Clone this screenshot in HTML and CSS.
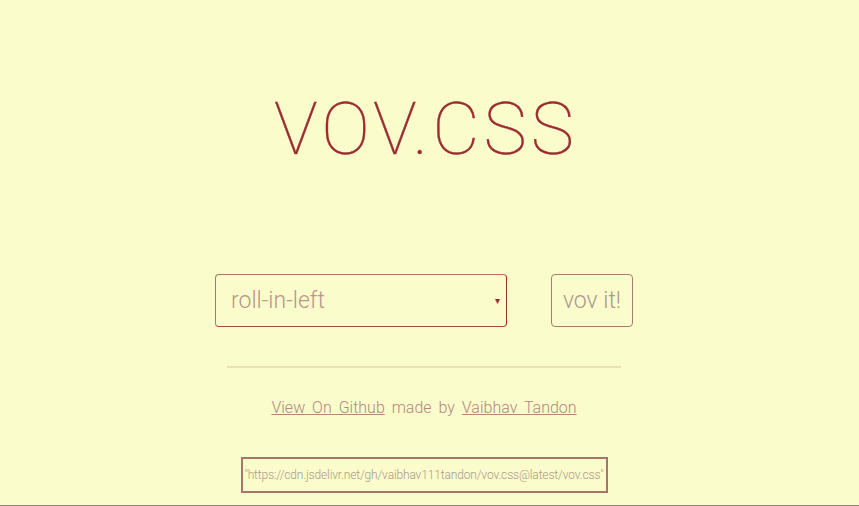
FILE: index.html
```html
<!DOCTYPE html>
<html>
<head>
<meta charset="utf-8">
<link rel="stylesheet" href="styles.css">
</head>
<body>
<div class="page">
  <h1 class="title">VOV.CSS</h1>
  <div class="controls">
    <div class="select">
      <span class="select-text">roll-in-left</span>
      <span class="caret">&#9662;</span>
    </div>
    <button class="btn">vov it!</button>
  </div>
  <hr class="rule">
  <p class="credits"><a href="#">View On Github</a> made by <a href="#">Vaibhav Tandon</a></p>
  <div class="cdn">"https://cdn.jsdelivr.net/gh/vaibhav111tandon/vov.css@latest/vov.css"</div>
</div>
</body>
</html>
```
FILE: styles.css
```css
html, body {
  margin: 0;
  padding: 0;
  background: #fafccc;
}
.page {
  height: 505px;
  border-bottom: 1px solid #8c8577;
  display: flex;
  flex-direction: column;
  align-items: center;
  padding-right: 11px;
  font-family: Roboto, "Liberation Sans", sans-serif;
  overflow: hidden;
}
.title {
  margin: 84px 0 0 0;
  font-weight: 100;
  font-size: 73px;
  line-height: 90px;
  color: #9a2b2e;
  letter-spacing: 4px;
  padding-left: 4px;
  -webkit-text-stroke: 0.4px #9a2b2e;
}
.controls {
  margin-top: 100px;
  display: flex;
  gap: 44px;
}
.select {
  width: 292px;
  height: 53px;
  box-sizing: border-box;
  border: 1px solid #ad7472;
  border-right-color: #9a2b2e;
  border-bottom-color: #a0484a;
  border-radius: 4px;
  display: flex;
  align-items: center;
  justify-content: space-between;
  padding: 0 6px 0 15px;
}
.select-text {
  font-size: 23px;
  font-weight: 300;
  color: #b9958a;
}
.caret {
  font-size: 10px;
  color: #9a2b2e;
}
.btn {
  width: 82px;
  height: 53px;
  box-sizing: border-box;
  background: transparent;
  border: 1.5px solid #a77a70;
  border-radius: 4px;
  font-family: Roboto, "Liberation Sans", sans-serif;
  font-size: 23px;
  font-weight: 300;
  color: #ad968c;
  padding: 0;
}
.rule {
  width: 394px;
  margin: 39px 0 0 0;
  border: 0;
  border-top: 2px solid #e6e2b4;
}
.credits {
  margin: 30px 0 0 0;
  font-size: 16px;
  font-weight: 300;
  color: #b4877c;
  word-spacing: 3px;
  letter-spacing: 0;
}
.credits a {
  color: #b4877c;
  text-decoration: underline;
}
.cdn {
  margin-top: 40px;
  width: 367px;
  height: 36px;
  box-sizing: border-box;
  border: 2px solid #a8756c;
  display: flex;
  align-items: center;
  justify-content: center;
  font-size: 12px;
  font-weight: 300;
  color: #b0958a;
  white-space: nowrap;
  letter-spacing: -0.15px;
}
```
